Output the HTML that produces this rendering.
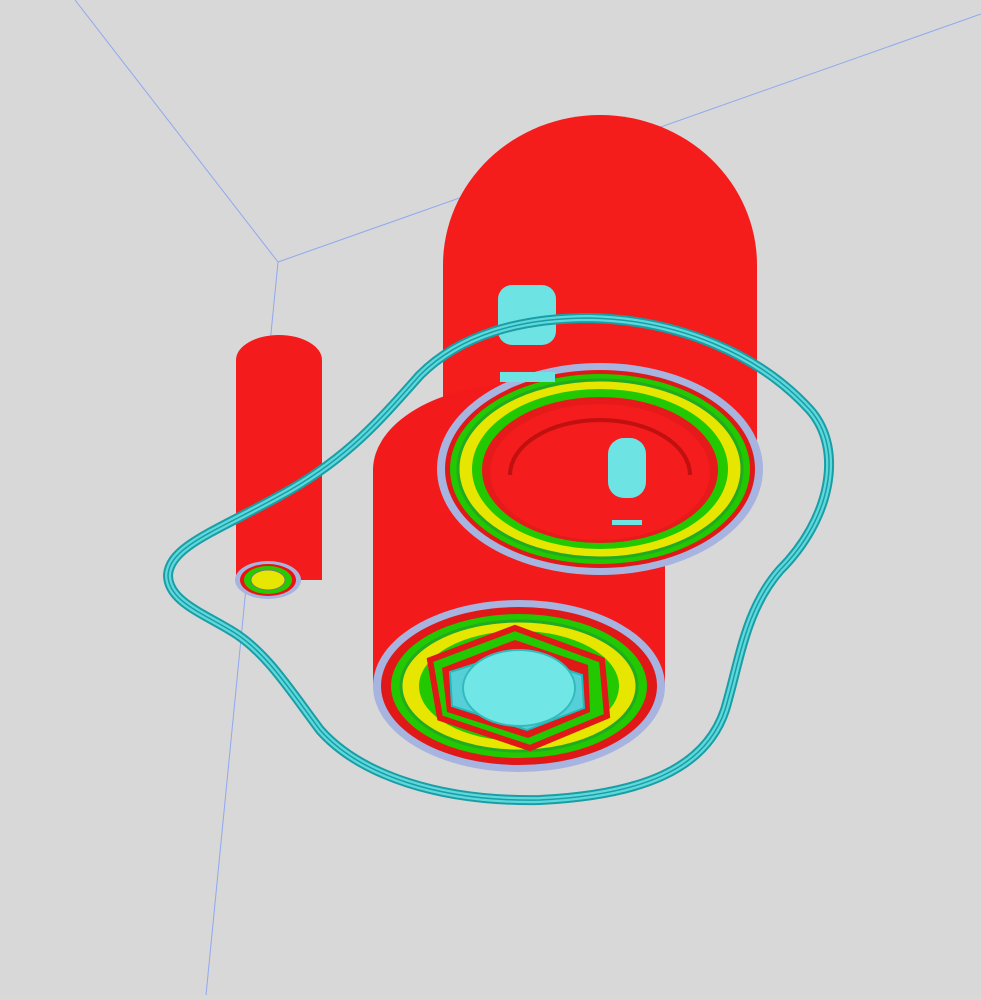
<!DOCTYPE html><html><head><style>html,body{margin:0;padding:0;background:#d9d9d9;overflow:hidden}</style></head><body>
<svg width="981" height="995" viewBox="0 0 981 995" xmlns="http://www.w3.org/2000/svg">
<rect width="981" height="995" fill="#d8d8d8"/>
<g stroke="#8fa8f0" stroke-width="1" fill="none">
<line x1="75" y1="0" x2="278" y2="262"/><line x1="278" y1="262" x2="981" y2="14"/><line x1="278" y1="262" x2="206" y2="995"/>
</g>
<path d="M443,470 L443,265 A157,150 0 0 1 757,265 L757,470 Z" fill="#f51c1c"/>
<path d="M373,686 L373,470 A146,86 0 0 1 665,470 L665,686 Z" fill="#f21a1a"/>
<path d="M236,580 L236,360 A43,25 0 0 1 322,360 L322,580 Z" fill="#f31b1b"/>
<ellipse cx="268" cy="580" rx="33" ry="19" fill="#a8b4e0"/>
<ellipse cx="268" cy="580" rx="28" ry="16" fill="#e11"/>
<ellipse cx="268" cy="580" rx="24" ry="14" fill="#22cc00"/>
<ellipse cx="268" cy="580" rx="17" ry="10" fill="#e6e600" stroke="#777" stroke-width="1"/>
<ellipse cx="600" cy="469" rx="163" ry="106" fill="#a8b4e0"/>
<ellipse cx="600" cy="469" rx="155" ry="99" fill="#e01818"/>
<ellipse cx="600" cy="469" rx="150" ry="95" fill="#22c800"/>
<ellipse cx="600" cy="469" rx="142" ry="89" fill="#e6e600" stroke="#2a2" stroke-width="3"/>
<ellipse cx="600" cy="469" rx="128" ry="80" fill="#22c800"/>
<ellipse cx="600" cy="470" rx="118" ry="73" fill="#e61a1a"/>
<ellipse cx="600" cy="472" rx="110" ry="68" fill="#f41c1c"/>
<path d="M510,475 A90,55 0 0 1 690,475" fill="none" stroke="#c01010" stroke-width="4"/>
<rect x="608" y="438" width="38" height="60" rx="16" fill="#6de3e3"/>
<rect x="498" y="285" width="58" height="60" rx="14" fill="#6de3e3"/>
<rect x="500" y="372" width="55" height="10" fill="#6de3e3"/>
<rect x="612" y="520" width="30" height="5" fill="#6de3e3"/>
<ellipse cx="519" cy="686" rx="146" ry="86" fill="#a8b4e0"/>
<ellipse cx="519" cy="686" rx="138" ry="79" fill="#e01818"/>
<ellipse cx="519" cy="686" rx="128" ry="72" fill="#22c800"/>
<ellipse cx="519" cy="686" rx="118" ry="65" fill="#e6e600" stroke="#2a2" stroke-width="3"/>
<ellipse cx="519" cy="686" rx="100" ry="55" fill="#22c800"/>
<polygon points="515,628 602,660 607,716 530,748 440,718 430,660" fill="#22c800" stroke="#e01818" stroke-width="6"/>
<polygon points="515,640 588,665 590,712 528,738 447,712 442,668" fill="#e01818"/>
<polygon points="513,652 582,675 584,708 527,730 452,706 450,672" fill="#55d0d8" stroke="#2bb" stroke-width="2"/>
<ellipse cx="519" cy="688" rx="56" ry="38" fill="#70e6e6" stroke="#3bb" stroke-width="2"/>
<g fill="none">
<path d="M168,575 C170,545 220,530 290,490 C350,455 380,420 420,375 C460,335 520,318 590,318 C680,320 760,355 810,410 C845,450 830,520 780,570 C745,610 740,660 725,710 C705,770 640,795 540,800 C440,802 360,775 320,730 C290,690 265,650 230,630 C200,612 168,600 168,575 Z" stroke="#1a9ea6" stroke-width="10"/>
<path d="M168,575 C170,545 220,530 290,490 C350,455 380,420 420,375 C460,335 520,318 590,318 C680,320 760,355 810,410 C845,450 830,520 780,570 C745,610 740,660 725,710 C705,770 640,795 540,800 C440,802 360,775 320,730 C290,690 265,650 230,630 C200,612 168,600 168,575 Z" stroke="#5fd8dc" stroke-width="6"/>
<path d="M168,575 C170,545 220,530 290,490 C350,455 380,420 420,375 C460,335 520,318 590,318 C680,320 760,355 810,410 C845,450 830,520 780,570 C745,610 740,660 725,710 C705,770 640,795 540,800 C440,802 360,775 320,730 C290,690 265,650 230,630 C200,612 168,600 168,575 Z" stroke="#1a9ea6" stroke-width="1.5"/>
</g>
</svg>
</body></html>
